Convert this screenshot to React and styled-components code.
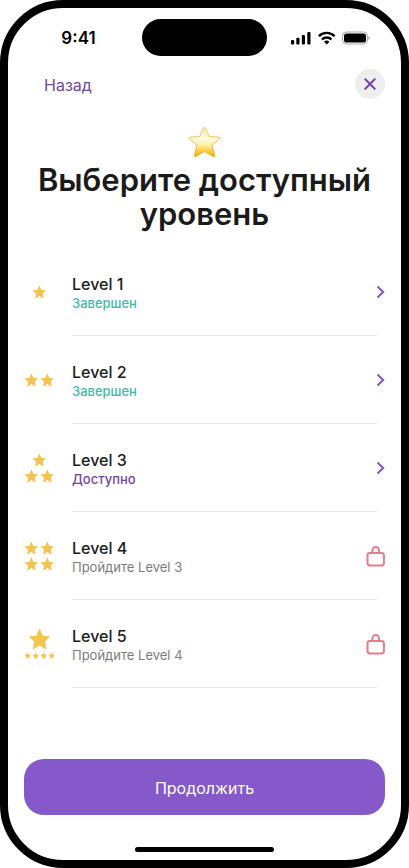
import styled, { createGlobalStyle } from "styled-components"

const levels = [
    { id: 1, status: "Завершен", type: "done", stars: [[1, 14]] },
    { id: 2, status: "Завершен", type: "done", stars: [[2, 14]] },
    { id: 3, status: "Доступно", type: "open", stars: [[1, 14], [2, 14]] },
    { id: 4, status: "Пройдите Level 3", type: "locked", stars: [[2, 14], [2, 14]] },
    { id: 5, status: "Пройдите Level 4", type: "locked", stars: [[1, 22], [4, 7]] },
]

const statusColors = {
    done: "#3dbea3",
    open: "#7047a3",
    locked: "#7d7d7d",
}

function Star({ size }) {
    return (
        <svg width={size} height={size} viewBox="0 0 24 24" fill="#f4c44e" aria-hidden="true">
            <path d="M12.6 .6 16.1 8.4 24 9.2 18.3 14.9 20.1 23.4 12.6 19 5.1 23.4 6.9 14.9 .8 9.2 9.1 8.4Z" />
        </svg>
    )
}

function BigStar() {
    return (
        <svg width="34" height="32" viewBox="0 0 34 32" aria-hidden="true">
            <defs>
                <linearGradient id="starFill" x1="0" y1="0" x2="0" y2="1">
                    <stop offset="0" stopColor="#fde9a6" />
                    <stop offset="0.4" stopColor="#fffbe0" />
                    <stop offset="0.6" stopColor="#fff0a6" />
                    <stop offset="0.8" stopColor="#fdd040" />
                    <stop offset="1" stopColor="#f3ac14" />
                </linearGradient>
                <linearGradient id="starEdge" x1="0" y1="0" x2="0" y2="1">
                    <stop offset="0" stopColor="#f3cb86" />
                    <stop offset="1" stopColor="#eeb02c" />
                </linearGradient>
            </defs>
            <path
                d="M15.6 1.6Q16.5 .2 17.4 1.6L21.4 10.6 31.1 11.1Q32.8 11.6 31.5 12.8L24 19.3 26.7 29.4Q26.8 31.1 25.2 30.4L16.5 25.4 7.8 30.4Q6.2 31.1 6.3 29.4L9 19.3 1.5 12.8Q.2 11.6 1.9 11.1L11.6 10.6Z"
                fill="url(#starFill)"
                stroke="url(#starEdge)"
                strokeWidth="1"
                strokeLinejoin="round"
            />
        </svg>
    )
}

function Chevron() {
    return (
        <svg width="9" height="14" viewBox="0 0 9 14" fill="none" stroke="#8559c9" strokeWidth="2.2" aria-hidden="true">
            <path d="M1.5 1.5 7.1 7 1.5 12.5" />
        </svg>
    )
}

function Lock() {
    return (
        <svg width="19" height="22" viewBox="0 0 19 22" fill="none" stroke="#e37d8b" strokeWidth="2" aria-hidden="true">
            <rect x="1.5" y="8" width="16.4" height="12.4" rx="2.4" />
            <path d="M6.4 8V5.2a3.3 3.3 0 0 1 6.6 0V8" />
        </svg>
    )
}

function StatusIcons() {
    return (
        <svg width="79" height="14" viewBox="0 0 79 14" aria-hidden="true">
            <rect x="0" y="9" width="3.2" height="4.4" rx="1" />
            <rect x="5.3" y="6.8" width="3.2" height="6.6" rx="1" />
            <rect x="10.8" y="4" width="3.2" height="9.4" rx="1" />
            <rect x="16.3" y="1" width="3.2" height="12.4" rx="1" />
            <g fill="none" stroke="#000" strokeWidth="2.4">
                <path d="M27.8 5.1a11.2 11.2 0 0 1 15.8 0" />
                <path d="M30.9 8.5a6.8 6.8 0 0 1 9.6 0" />
            </g>
            <path d="M33 10.7a3.9 3.9 0 0 1 5.4 0L35.7 13.4Z" />
            <rect x="51.5" y="1" width="25" height="12" rx="4" fill="none" stroke="#aaa" />
            <rect x="53" y="2.5" width="22" height="9" rx="2.6" />
            <path d="M77.4 5v4q1.4-.6 1.4-2t-1.4-2Z" fill="#aaa" />
        </svg>
    )
}

function Level({ level }) {
    const locked = level.type === "locked"

    return (
        <LevelItem>
            <LevelButton type="button" disabled={locked}>
                <StarsContainer>
                    {level.stars.map(([count, size], i) => (
                        <StarsRow key={i} $small={size < 10}>
                            {Array.from({ length: count }, (_, n) => <Star key={n} size={size} />)}
                        </StarsRow>
                    ))}
                </StarsContainer>
                <LevelText>
                    <LevelName>Level {level.id}</LevelName>
                    <LevelStatus $type={level.type}>{level.status}</LevelStatus>
                </LevelText>
                {locked ? <Lock /> : <Chevron />}
            </LevelButton>
        </LevelItem>
    )
}

export default function App() {
    return (
        <Phone>
            <GlobalStyle />
            <StatusBar>
                <Time>9:41</Time>
                <Island />
                <StatusIcons />
            </StatusBar>

            <NavBar>
                <BackLink href="#">Назад</BackLink>
                <CloseButton type="button" aria-label="Закрыть">
                    <svg width="12" height="12" viewBox="0 0 12 12" fill="none" stroke="#7047a3" strokeWidth="2" strokeLinecap="round" aria-hidden="true">
                        <path d="M1.3 1.3 10.7 10.7M10.7 1.3 1.3 10.7" />
                    </svg>
                </CloseButton>
            </NavBar>

            <Header>
                <BigStar />
                <Title>Выберите доступный уровень</Title>
            </Header>

            <LevelList>
                {levels.map((level) => <Level key={level.id} level={level} />)}
            </LevelList>

            <Footer>
                <ContinueButton type="button">Продолжить</ContinueButton>
                <HomeIndicator />
            </Footer>
        </Phone>
    )
}

const GlobalStyle = createGlobalStyle`
    * {
        box-sizing: border-box;
    }
    body {
        margin: 0;
        background-color: #fff;
        font-family: Inter, sans-serif;
        color: #1b1b1b;
    }
    button {
        font-family: inherit;
        color: inherit;
        border: none;
        padding: 0;
    }
    svg {
        display: block;
        flex-shrink: 0;
    }
`
const Phone = styled.main`
    min-height: 100vh;
    display: flex;
    flex-direction: column;
    border: 8px solid #000;
    border-radius: 63px;
    background-color: #fff;
`
const StatusBar = styled.div`
    display: grid;
    grid-template-columns: 1fr auto 1fr;
    align-items: center;
    justify-items: center;
    padding: 11px 7px 0;
`
const Time = styled.span`
    font-size: 17px;
    line-height: 22px;
    font-weight: 600;
    color: #000;
`
const Island = styled.div`
    width: 125px;
    height: 37px;
    border-radius: 19px;
    background-color: #000;
`
const NavBar = styled.nav`
    display: flex;
    align-items: center;
    justify-content: space-between;
    padding: 13px 16px 0 36px;
`
const BackLink = styled.a`
    padding-top: 2px;
    font-size: 16px;
    line-height: 24px;
    color: #7047a3;
    text-decoration: none;
`
const CloseButton = styled.button`
    width: 30px;
    height: 30px;
    display: flex;
    align-items: center;
    justify-content: center;
    border-radius: 50%;
    background-color: #eee;
`
const Header = styled.header`
    display: flex;
    flex-direction: column;
    align-items: center;
    padding: 27px 16px 0;
`
const Title = styled.h1`
    margin: 5px 0 0;
    font-size: 31px;
    line-height: 34px;
    font-weight: 600;
    text-align: center;
`
const LevelList = styled.ul`
    margin: 17px 0 0;
    padding: 0 16px;
    list-style: none;
`
const LevelItem = styled.li`
    display: flex;
    flex-direction: column;

    &::after {
        content: "";
        height: 1px;
        margin: 0 8px 0 48px;
        background-color: #e8e8e8;
    }
`
const LevelButton = styled.button`
    height: 87px;
    display: flex;
    align-items: center;
    gap: 18px;
    background: none;
    text-align: left;
`
const StarsContainer = styled.span`
    width: 30px;
    display: flex;
    flex-direction: column;
    align-items: center;
    gap: 2px;
`
const StarsRow = styled.span`
    display: flex;
    gap: ${({ $small }) => $small ? "1px" : "2px"};
`
const LevelText = styled.span`
    flex: 1;
    display: flex;
    flex-direction: column;
    padding-top: 2px;
`
const LevelName = styled.span`
    font-size: 16px;
    line-height: 20px;
    font-weight: 500;
`
const LevelStatus = styled.span`
    font-size: 13px;
    line-height: 18px;
    font-weight: ${({ $type }) => $type === "locked" ? 400 : 500};
    color: ${({ $type }) => statusColors[$type]};
`
const Footer = styled.footer`
    margin-top: auto;
    display: flex;
    flex-direction: column;
    align-items: center;
    gap: 32px;
    padding: 0 16px 8px;
`
const ContinueButton = styled.button`
    width: 100%;
    height: 56px;
    padding-top: 2px;
    border-radius: 20px;
    background-color: #8559c9;
    color: #fff;
    font-size: 16px;
`
const HomeIndicator = styled.div`
    width: 139px;
    height: 5px;
    border-radius: 3px;
    background-color: #000;
`
